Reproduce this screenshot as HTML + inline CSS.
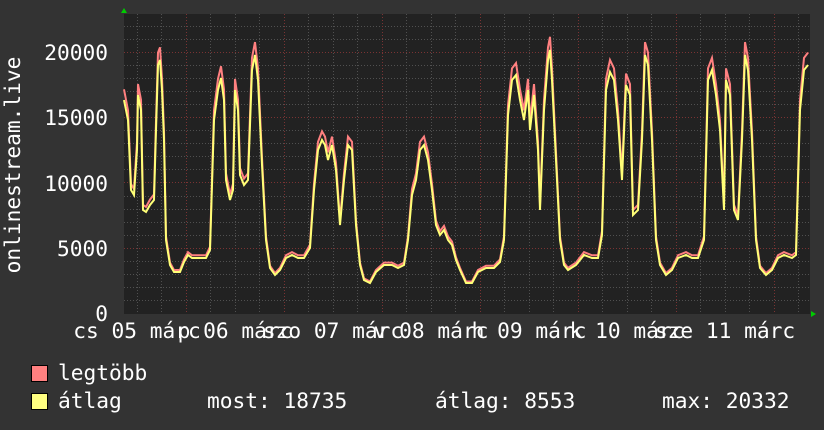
<!DOCTYPE html>
<html><head><meta charset="utf-8"><style>
html,body{margin:0;padding:0;background:#333333;}
svg{display:block}
text{font-family:"DejaVu Sans Mono","Liberation Mono",monospace;font-size:21.2px;fill:#ffffff}
</style></head><body>
<svg width="824" height="430" viewBox="0 0 824 430" xmlns="http://www.w3.org/2000/svg">
<rect width="824" height="430" fill="#333333"/>
<rect x="124" y="14" width="686" height="300" fill="#222222"/>
<g stroke="#505050" stroke-width="1" stroke-dasharray="1,2">
<path d="M124 300.5H810M124 287.5H810M124 274.5H810M124 261.5H810M124 235.5H810M124 222.5H810M124 209.5H810M124 196.5H810M124 169.5H810M124 156.5H810M124 143.5H810M124 130.5H810M124 104.5H810M124 91.5H810M124 78.5H810M124 65.5H810M124 39.5H810M124 26.5H810"/>
<path d="M137.5 14V314M161.5 14V314M210.5 14V314M235.5 14V314M259.5 14V314M308.5 14V314M333.5 14V314M357.5 14V314M406.5 14V314M431.5 14V314M455.5 14V314M504.5 14V314M529.5 14V314M553.5 14V314M602.5 14V314M627.5 14V314M651.5 14V314M700.5 14V314M725.5 14V314M749.5 14V314M798.5 14V314"/>
</g>
<g stroke="#7a3333" stroke-width="1" stroke-dasharray="1,2">
<path d="M124 248.5H810M124 182.5H810M124 117.5H810M124 52.5H810"/>
<path d="M186.5 14V314M284.5 14V314M382.5 14V314M480.5 14V314M578.5 14V314M676.5 14V314M774.5 14V314"/>
</g>
<polyline fill="none" stroke="#ff8080" stroke-width="2" transform="translate(0,313) scale(1,1.05) translate(0,-313)" vector-effect="non-scaling-stroke" points="124,100 128,120 131,190 134,195 137,150 138,95 141,110 143,210 146,212 150,205 154,200 156,130 158,65 160,60 162,90 164,140 166,240 170,265 174,272 180,272 184,262 188,255 192,258 200,258 206,258 210,250 214,120 218,90 221,78 224,100 226,180 230,200 233,190 235,90 238,110 240,175 244,185 248,180 252,70 255,55 258,80 262,165 266,240 270,268 275,275 280,270 286,258 292,255 298,258 304,258 310,248 314,190 318,150 322,140 325,145 328,160 332,145 336,170 340,225 344,180 348,145 352,150 356,225 360,265 364,280 370,283 376,272 384,265 392,265 398,268 404,265 408,240 412,195 416,180 420,150 424,145 428,160 432,190 436,225 440,235 444,230 448,240 452,245 456,260 460,270 466,283 472,283 478,272 486,268 494,268 500,262 504,240 508,115 512,80 516,75 520,100 524,120 528,90 530,130 534,95 538,150 540,210 544,110 548,60 550,50 552,80 556,160 560,240 564,265 568,270 576,265 584,255 592,258 598,258 602,235 606,90 610,72 614,80 618,120 622,180 626,85 630,95 633,215 638,210 642,140 645,55 648,65 652,140 656,240 660,265 666,275 672,270 678,258 686,255 692,258 698,258 704,240 708,80 712,70 716,95 720,130 724,210 726,80 730,95 734,210 738,220 742,140 745,55 748,70 752,140 756,240 760,268 766,275 772,270 778,258 784,255 792,258 796,255 800,110 804,70 808,65"/>
<polyline fill="none" stroke="#ffff77" stroke-width="2" points="124,100 128,120 131,190 134,195 137,150 138,95 141,110 143,210 146,212 150,205 154,200 156,130 158,65 160,60 162,90 164,140 166,240 170,265 174,272 180,272 184,262 188,255 192,258 200,258 206,258 210,250 214,120 218,90 221,78 224,100 226,180 230,200 233,190 235,90 238,110 240,175 244,185 248,180 252,70 255,55 258,80 262,165 266,240 270,268 275,275 280,270 286,258 292,255 298,258 304,258 310,248 314,190 318,150 322,140 325,145 328,160 332,145 336,170 340,225 344,180 348,145 352,150 356,225 360,265 364,280 370,283 376,272 384,265 392,265 398,268 404,265 408,240 412,195 416,180 420,150 424,145 428,160 432,190 436,225 440,235 444,230 448,240 452,245 456,260 460,270 466,283 472,283 478,272 486,268 494,268 500,262 504,240 508,115 512,80 516,75 520,100 524,120 528,90 530,130 534,95 538,150 540,210 544,110 548,60 550,50 552,80 556,160 560,240 564,265 568,270 576,265 584,255 592,258 598,258 602,235 606,90 610,72 614,80 618,120 622,180 626,85 630,95 633,215 638,210 642,140 645,55 648,65 652,140 656,240 660,265 666,275 672,270 678,258 686,255 692,258 698,258 704,240 708,80 712,70 716,95 720,130 724,210 726,80 730,95 734,210 738,220 742,140 745,55 748,70 752,140 756,240 760,268 766,275 772,270 778,258 784,255 792,258 796,255 800,110 804,70 808,65"/>
<polygon points="121,13 124,8 127,13" fill="#00cc00"/>
<polygon points="811,311 816,314 811,317" fill="#00cc00"/>
<g text-anchor="end">
<text x="108" y="60">20000</text>
<text x="108" y="125">15000</text>
<text x="108" y="191">10000</text>
<text x="108" y="256">5000</text>
<text x="108" y="321">0</text>
</g>
<text transform="translate(20,165) rotate(-90)" text-anchor="middle">onlinestream.live</text>
<g text-anchor="middle">
<text x="137" y="338">cs 05 márc</text>
<text x="235" y="338">p 06 márc</text>
<text x="333" y="338">szo 07 márc</text>
<text x="431" y="338">v 08 márc</text>
<text x="529" y="338">h 09 márc</text>
<text x="627" y="338">k 10 márc</text>
<text x="725" y="338">sze 11 márc</text>
</g>
<rect x="31.5" y="365.5" width="16" height="16" fill="#ff8080" stroke="#000"/>
<rect x="31.5" y="393.5" width="16" height="16" fill="#ffff80" stroke="#000"/>
<text x="58" y="380">legtöbb</text>
<text x="58" y="408">átlag</text>
<text x="207" y="408">most: 18735</text>
<text x="435" y="408">átlag: 8553</text>
<text x="662" y="408">max: 20332</text>
</svg>
</body></html>
